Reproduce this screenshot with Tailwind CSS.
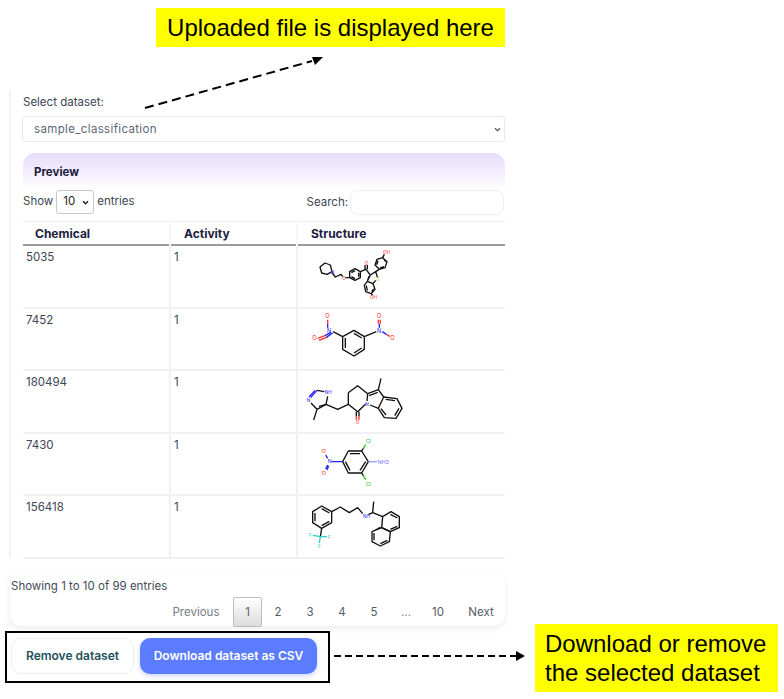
<!DOCTYPE html>
<html lang="en">
<head>
    <meta charset="utf-8" />
    <meta name="viewport" content="width=device-width, initial-scale=1.0" />
    <title>Dataset</title>
    <script src="https://cdn.jsdelivr.net/npm/@tailwindcss/browser@4"></script>
</head>
<body class="bg-white">
<div class="relative w-[784px] h-[699px] overflow-hidden pt-[90px] font-['Inter',sans-serif] text-[11.5px] text-[#3d4654]">

    <!-- Dataset panel -->
    <div class="ml-[9px] w-[496px] h-[468px] border-l-[2px] border-[#f4f4f6] pl-[11px]">
        <div class="pt-[5px] pl-[1px] leading-[14px]">Select dataset:</div>
        <div class="relative mt-[7px]">
            <select class="appearance-none w-full h-[26px] border border-[#e6e8eb] rounded-[3px] pl-[11px] pt-[1px] text-[11.5px] tracking-[0.35px] text-[#5d6674]">
                <option>sample_classification</option>
            </select>
            <svg class="absolute right-[4px] top-[11px]" width="7" height="5" viewBox="0 0 8 6"><path d="M1 1.5 4 4.5 7 1.5" fill="none" stroke="#555" stroke-width="1.4"/></svg>
        </div>

        <div class="ml-[1px] mt-[11px] h-[37px] rounded-t-[12px] bg-gradient-to-b from-[#e7dcfb] to-white pl-[11px] pt-[12px] leading-[14px] font-bold text-[#1a2040]">Preview</div>

        <div class="h-[31px] pl-[1px] flex items-start justify-between">
            <div class="flex items-center gap-[3px] h-[24px]">
                <span>Show</span>
                <div class="relative w-[38px] h-[24px]">
                    <select class="appearance-none w-full h-[24px] border border-[#c6c9ce] rounded-[3px] pl-[6px] text-[11.5px] text-[#222]">
                        <option>10</option>
                    </select>
                    <svg class="absolute right-[5px] top-[10px]" width="7" height="5" viewBox="0 0 8 6"><path d="M1 1.5 4 4.5 7 1.5" fill="none" stroke="#222" stroke-width="1.7"/></svg>
                </div>
                <span>entries</span>
            </div>
            <div class="flex items-center gap-[2px] h-[25px] pr-[1px]">
                <span>Search:</span>
                <input type="text" class="w-[154px] h-[25px] border border-[#eceef0] rounded-[8px]" />
            </div>
        </div>

        <table class="ml-[1px] w-[482px] table-fixed border-collapse">
            <thead>
                <tr class="h-[23px] border-t border-[#f0f0f2] border-b-2 border-b-[#9b9b9f] font-bold text-[12px] text-[#1a2040] text-left">
                    <th class="w-[147px] pl-[12px] pt-[2px] border-r-2 border-[#f6f6f8]">Chemical</th>
                    <th class="w-[127px] pl-[13px] pt-[2px] border-r-2 border-[#f6f6f8]">Activity</th>
                    <th class="pl-[13px] pt-[2px]">Structure</th>
                </tr>
            </thead>
            <tbody>
                <tr class="h-[62px] border-b-2 border-[#f1f1f3] align-top">
                    <td class="pl-[3px] pt-[3px] border-r-2 border-[#f1f1f3]">5035</td>
                    <td class="pl-[3px] pt-[3px] border-r-2 border-[#f1f1f3]">1</td>
                    <td>
                        <svg class="block ml-[2px]" width="121" height="61" viewBox="-3 15 363 183" fill="none" stroke="#111" stroke-width="4" stroke-linejoin="round" font-family="Inter, sans-serif" font-size="14">
                            <path d="M57 78 72 66 88 72 93 92 78 100 62 96Z"/>
                            <path d="M93 95 103 108 120 100 125 107"/>
                            <path d="M133 110 146 110 146 92 162 83 178 92 178 110 162 118 146 110M151 95 162 89M173 95 173 107M151 107 162 113"/>
                            <path d="M178 92 195 85 208 102M192 85 192 72M199 85 199 72" />
                            <path d="M208 102 224 92 229 108M224 118 216 128 199 121 208 102M204 106 200 118"/>
                            <path d="M199 121 190 133 194 152 211 158 222 145 216 128M196 134 199 149M212 152 218 144"/>
                            <path d="M224 92 235 85 222 72 228 55 245 50 258 62 252 80 235 85M227 71 231 59M249 55 254 62M249 77 237 81"/>
                            <path d="M245 50 250 40M211 158 214 163"/>
                            <g stroke="none">
                                <text x="89" y="99" fill="#2222ff">N</text>
                                <text x="124" y="116" fill="#ff2020">O</text>
                                <text x="191" y="72" fill="#ff2020">O</text>
                                <text x="226" y="120" fill="#c6b400">S</text>
                                <text x="207" y="175" fill="#ff2020">OH</text>
                                <text x="246" y="38" fill="#ff2020">OH</text>
                            </g>
                        </svg>
                    </td>
                </tr>
                <tr class="h-[61px] border-b-2 border-[#f1f1f3] align-top">
                    <td class="pl-[3px] pt-[3px] border-r-2 border-[#f1f1f3]">7452</td>
                    <td class="pl-[3px] pt-[3px] border-r-2 border-[#f1f1f3]">1</td>
                    <td>
                        <svg class="block ml-[2px]" width="121" height="60" viewBox="-3 204 363 180" fill="none" stroke="#111" stroke-width="4" stroke-linejoin="round" font-family="Inter, sans-serif" font-size="17">
                            <path d="M159 268 190 287 190 325 159 345 125 325 125 287ZM159 277 182 291M182 321 159 336M133 321 133 291"/>
                            <path d="M125 287 96 272M190 287 226 272"/>
                            <path stroke="#2222ff" d="M80 260 80 248M235 260 235 248M244 272 256 280M90 274 72 284M95 276 75 290"/>
                            <path stroke="#ff3030" d="M80 248 80 236M232 248 232 236M238 248 238 236M72 284 50 292M75 290 54 298M256 280 266 286"/>
                            <g stroke="none">
                                <text x="78" y="276" fill="#2222ff">N</text>
                                <text x="228" y="276" fill="#2222ff">N</text>
                                <text x="73" y="232" fill="#ff2020">O</text>
                                <text x="228" y="232" fill="#ff2020">O</text>
                                <text x="34" y="298" fill="#ff2020">O</text>
                                <text x="268" y="297" fill="#ff2020">O</text>
                            </g>
                        </svg>
                    </td>
                </tr>
                <tr class="h-[62px] border-b-2 border-[#f1f1f3] align-top">
                    <td class="pl-[3px] pt-[3px] border-r-2 border-[#f1f1f3]">180494</td>
                    <td class="pl-[3px] pt-[3px] border-r-2 border-[#f1f1f3]">1</td>
                    <td>
                        <svg class="block ml-[2px]" width="121" height="61" viewBox="27 0 363 183" fill="none" stroke="#111" stroke-width="4" stroke-linejoin="round" font-family="Inter, sans-serif" font-size="14">
                            <path d="M172 65 200 44 230 68M224 99 200 122 172 100 172 65"/>
                            <path d="M230 68 262 56 278 78 262 112 237 102M234 74 260 64M230 68 228 90"/>
                            <path d="M262 56 270 22"/>
                            <path d="M278 78 318 83 333 112 315 142 280 140 262 112M284 85 312 89M324 112 311 134M285 132 270 113"/>
                            <path d="M172 100 140 115 105 100 78 115 68 147M105 100 110 76M100 62 78 58"/>
                            <path d="M105 100 84 106M78 115 60 96"/>
                            <path stroke="#ff3030" d="M196 136 196 146M204 136 204 146"/>
                            <path d="M196 122 196 136M204 122 204 136"/>
                            <path stroke="#2222ff" d="M78 58 59 80M72 58 54 78"/>
                            <g stroke="none">
                                <text x="223" y="106" fill="#2222ff">N</text>
                                <text x="194" y="158" fill="#ff2020">O</text>
                                <text x="101" y="69" fill="#2222ff">NH</text>
                                <text x="47" y="94" fill="#2222ff">N</text>
                            </g>
                        </svg>
                    </td>
                </tr>
                <tr class="h-[61px] border-b-2 border-[#f1f1f3] align-top">
                    <td class="pl-[3px] pt-[3px] border-r-2 border-[#f1f1f3]">7430</td>
                    <td class="pl-[3px] pt-[3px] border-r-2 border-[#f1f1f3]">1</td>
                    <td>
                        <svg class="block ml-[2px]" width="121" height="60" viewBox="27 189 363 180" fill="none" stroke="#111" stroke-width="4" stroke-linejoin="round" font-family="Inter, sans-serif" font-size="16">
                            <path d="M172 240 212 240 232 272 212 306 172 306 155 272ZM177 248 207 248M224 272 207 298M177 298 163 272"/>
                            <path stroke="#22cc22" d="M217 232 224 221M217 314 224 326"/>
                            <path d="M212 240 217 232M212 306 217 314"/>
                            <path stroke="#2222ff" d="M122 272 155 272M110 262 104 252M110 282 104 294M113 284 108 297"/>
                            <path stroke="#9a9aff" d="M232 272 258 272"/>
                            <g stroke="none">
                                <text x="110" y="277" fill="#2222ff">N</text>
                                <text x="92" y="246" fill="#ff2020">O</text>
                                <text x="92" y="312" fill="#ff2020">O</text>
                                <text x="224" y="216" fill="#22cc22">Cl</text>
                                <text x="224" y="346" fill="#22cc22">Cl</text>
                                <text x="260" y="279" fill="#7070ff">NH2</text>
                            </g>
                        </svg>
                    </td>
                </tr>
                <tr class="h-[62px] border-b-2 border-[#f1f1f3] align-top">
                    <td class="pl-[3px] pt-[3px] border-r-2 border-[#f1f1f3]">156418</td>
                    <td class="pl-[3px] pt-[3px] border-r-2 border-[#f1f1f3]">1</td>
                    <td>
                        <svg class="block ml-[2px]" width="121" height="61" viewBox="27 375 363 183" fill="none" stroke="#111" stroke-width="4" stroke-linejoin="round" font-family="Inter, sans-serif" font-size="14">
                            <path d="M92 405 122 422 122 455 92 472 65 455 65 422ZM92 413 115 426M115 451 92 464M72 451 72 426"/>
                            <path d="M122 422 148 408 175 425 200 410 215 428M232 431 245 425 248 392M245 425 275 437"/>
                            <path d="M275 437 300 422 325 437 325 470 298 482 272 470ZM298 430 319 441M319 466 298 475"/>
                            <path d="M272 470 298 482 295 512 268 525 243 512 243 482ZM289 508 268 518M249 508 249 486M248 480 268 469"/>
                            <path d="M92 472 88 497"/>
                            <path stroke="#33cccc" d="M88 497 66 493M88 497 108 497M88 497 85 516"/>
                            <g stroke="none">
                                <text x="216" y="441" fill="#2222ff">NH</text>
                                <text x="53" y="497" fill="#33cccc">F</text>
                                <text x="110" y="503" fill="#33cccc">F</text>
                                <text x="81" y="530" fill="#33cccc">F</text>
                            </g>
                        </svg>
                    </td>
                </tr>
            </tbody>
        </table>
    </div>

    <!-- Footer of the table -->
    <div class="ml-[9px] mt-[17px] w-[496px] h-[51px] border-l-2 border-[#f8f8fa] rounded-b-[12px] shadow-[0_3px_6px_rgba(0,0,0,0.07)]">
        <div class="pt-[1px] leading-[20px] text-[#444c58]">Showing 1 to 10 of 99 entries</div>
        <div class="mt-[1px] flex items-center justify-end pr-[5px] text-[#555c68] text-center">
            <span class="w-[74px] pt-[2px] text-[#777d87]">Previous</span>
            <span class="w-[29px] h-[30px] leading-[29px] border border-[#bdbdbd] rounded-[2px] bg-gradient-to-b from-white to-[#dcdcdc]">1</span>
            <span class="w-[32px] pt-[2px]">2</span>
            <span class="w-[32px] pt-[2px]">3</span>
            <span class="w-[32px] pt-[2px]">4</span>
            <span class="w-[32px] pt-[2px]">5</span>
            <span class="w-[32px] pt-[2px] text-[#888]">...</span>
            <span class="w-[32px] pt-[2px]">10</span>
            <span class="ml-[8px] w-[38px] pt-[2px]">Next</span>
        </div>
    </div>

    <!-- Remove and download -->
    <div class="ml-[5px] mt-[5px] w-[325px] h-[52px] border-2 border-black pl-[4px] pt-[5px] flex gap-[6px] items-start text-[12px] font-semibold">
        <button class="w-[123px] h-[36px] border border-[#eeeef0] rounded-[10px] text-[#24505c]">Remove dataset</button>
        <button class="w-[177px] h-[36px] rounded-[10px] bg-[#5b7cff] text-white shadow-[0_2px_5px_rgba(91,124,255,0.3)]">Download dataset as CSV</button>
    </div>

    <!-- Annotations -->
    <div class="absolute left-[156px] top-[8px] w-[349px] h-[39px] bg-[#ffff00] text-black text-center font-['Liberation_Sans',sans-serif] text-[24px] leading-[39px]">Uploaded file is displayed here</div>
    <div class="absolute left-[535px] top-[624px] w-[243px] h-[68px] bg-[#ffff00] text-black pl-[10px] pt-[5px] font-['Liberation_Sans',sans-serif] text-[24px] leading-[29px]">Download or remove<br />the selected dataset</div>

    <svg class="absolute left-0 top-0 pointer-events-none" width="784" height="699" fill="none">
        <path d="M145 108 312 61" stroke="#000" stroke-width="2" stroke-dasharray="9 5"/>
        <path d="M323 57 312 57 315 65Z" fill="#000"/>
        <path d="M334 656 516 656" stroke="#000" stroke-width="2" stroke-dasharray="7 4"/>
        <path d="M525 656 516 651 516 661Z" fill="#000"/>
    </svg>
</div>
</body>
</html>
